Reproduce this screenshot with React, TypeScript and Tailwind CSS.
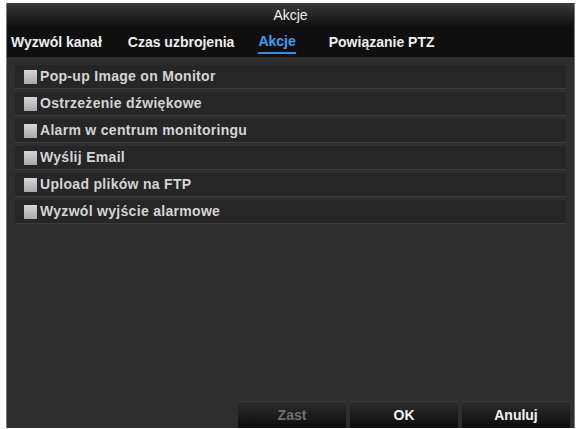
import React from "react";

const tabs = [
  { label: "Wyzwól kanał", active: false },
  { label: "Czas uzbrojenia", active: false },
  { label: "Akcje", active: true },
  { label: "Powiązanie PTZ", active: false },
];

const actions = [
  "Pop-up Image on Monitor",
  "Ostrzeżenie dźwiękowe",
  "Alarm w centrum monitoringu",
  "Wyślij Email",
  "Upload plików na FTP",
  "Wyzwól wyjście alarmowe",
];

function Row({ label }: { label: string }) {
  return (
    <div className="flex h-[24px] items-center border-b border-[#3c3c3c] bg-[#262626] pl-[9px]">
      <span className="h-[14px] w-[13px] bg-gradient-to-b from-[#d6d6d6] to-[#a9a9a9]" />
      <span className="ml-[3px] text-[14px] font-bold tracking-[0.3px] text-[#d4d4d4]">{label}</span>
    </div>
  );
}

function Btn({ label, disabled }: { label: string; disabled?: boolean }) {
  return (
    <button
      className={
        "h-[27px] w-[108px] border-t border-[#3a3a3a] bg-gradient-to-b from-[#2c2c2c] to-[#0d0d0d] text-[14px] font-bold " +
        (disabled ? "text-[#6f6f6f]" : "text-[#f2f2f2]")
      }
    >
      {label}
    </button>
  );
}

export default function App() {
  return (
    <div
      className="h-[429px] w-[579px] bg-white pb-[1px] pl-[6px] pr-[4px] pt-[3px]"
      style={{ fontFamily: '"Liberation Sans", Arial, sans-serif' }}
    >
      <div className="flex h-full flex-col border-x border-[#7a7a7a] bg-[#2e2e2e]">
        <div className="flex h-[24px] items-center justify-center bg-gradient-to-b from-[#3a3a3a] to-[#0f0f0f] text-[14px] text-[#f0f0f0]">
          Akcje
        </div>
        <div className="flex h-[30px] items-center gap-[24px] bg-[#0f0f0f] pl-[4px]">
          {tabs.map((t, i) => (
            <span
              key={t.label}
              className={
                "text-[14px] font-bold " +
                (i === 1 ? "ml-[2px] " : "") +
                (i === 3 ? "ml-[9px] " : "") +
                (t.active ? "border-b-2 border-[#2f8fd8] text-[#3aa0ee]" : "text-[#eeeeee]")
              }
            >
              {t.label}
            </span>
          ))}
        </div>
        <div className="flex flex-1 flex-col gap-[3px] px-[8px] pt-[8px]">
          {actions.map((a) => (
            <Row key={a} label={a} />
          ))}
        </div>
        <div className="flex justify-end gap-[4px] pr-[4px]">
          <Btn label="Zast" disabled />
          <Btn label="OK" />
          <Btn label="Anuluj" />
        </div>
      </div>
    </div>
  );
}
